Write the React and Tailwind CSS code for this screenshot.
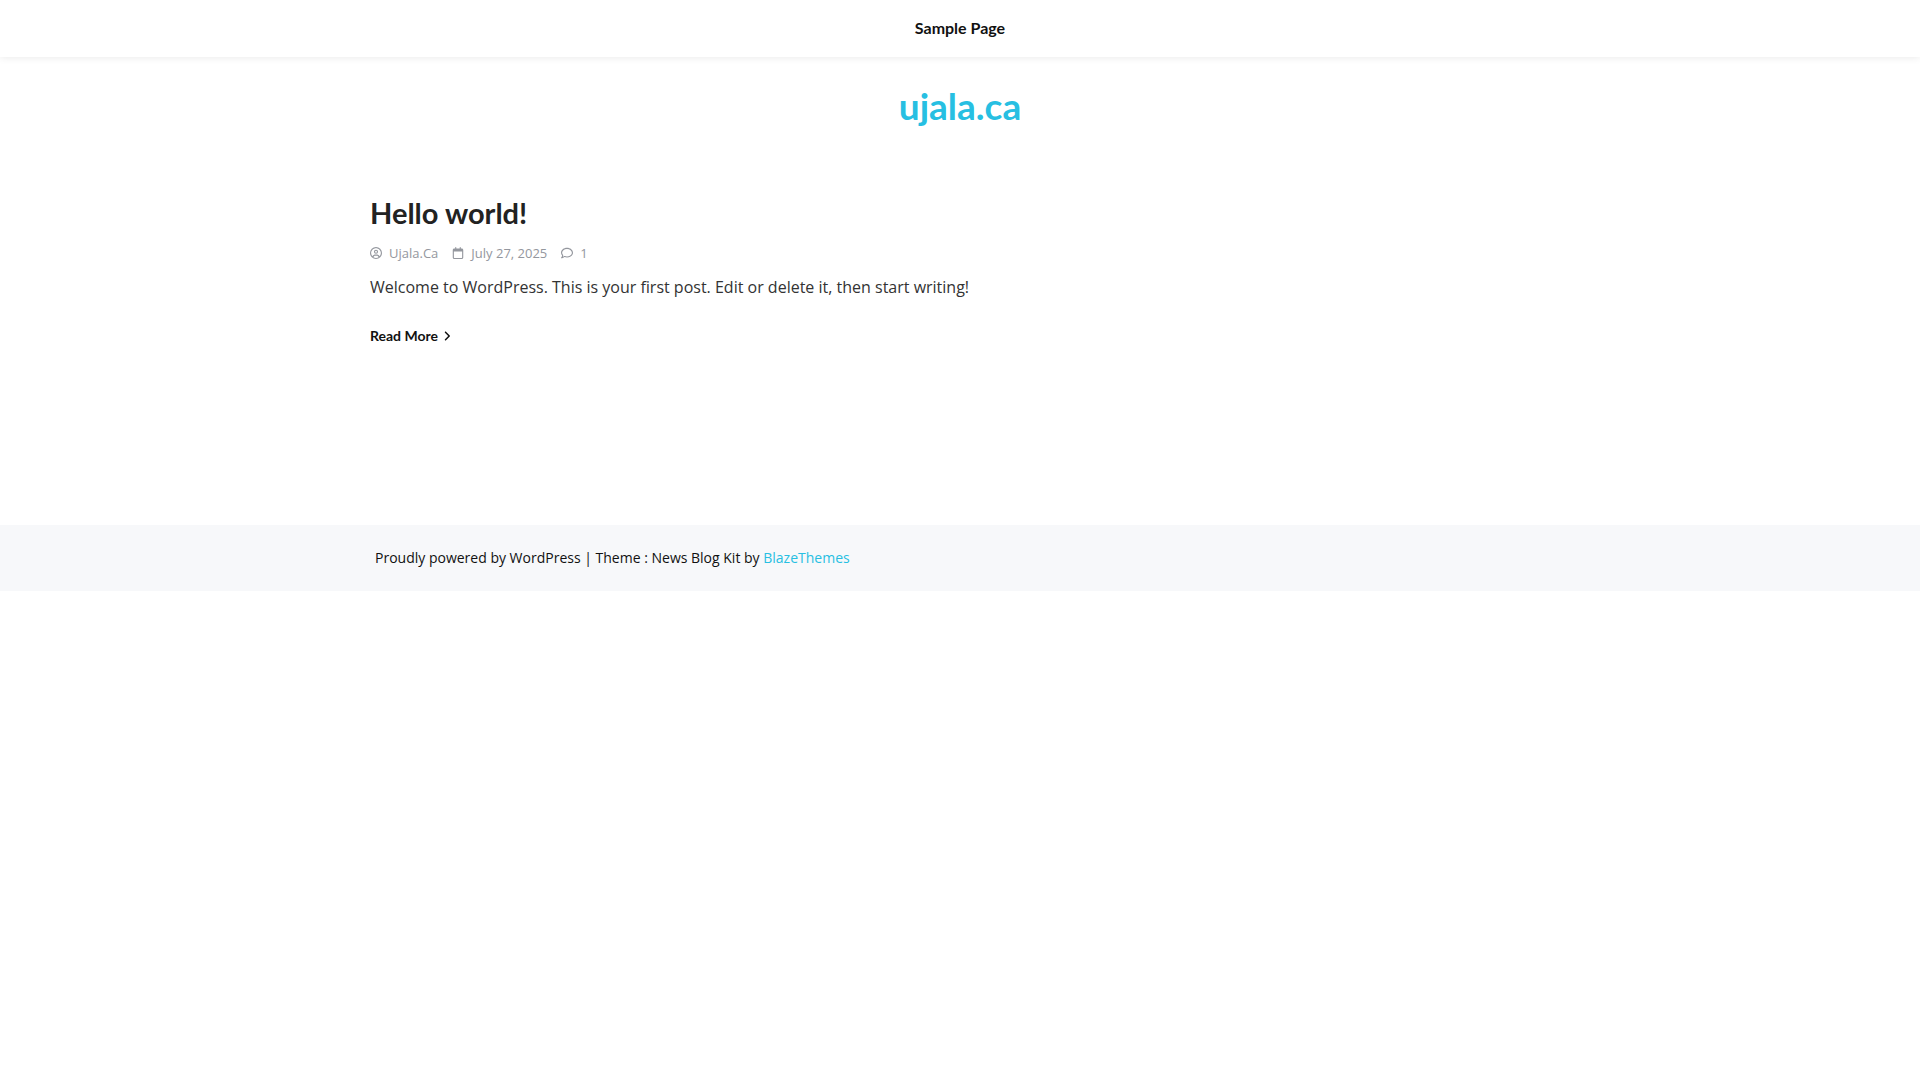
import { FaAngleRight, FaRegCalendar, FaRegCircleUser, FaRegComment } from "react-icons/fa6";

function Meta({ icon: Icon, children }) {
  return (
    <a href="#" className="flex items-center gap-[7px]">
      <Icon className="size-3" aria-hidden="true" />
      <span>{children}</span>
    </a>
  );
}

export default function App() {
  return (
    <div className="bg-white font-['Open_Sans',sans-serif] text-[#333333]">
      <nav className="flex justify-center bg-white pt-4 pb-[17px] font-['Lato',sans-serif] shadow-[0_0_8px_rgba(0,0,0,0.1)]">
        <a href="#" className="text-base leading-6 font-bold text-[#111111]">Sample Page</a>
      </nav>
      <header className="flex justify-center py-6 font-['Lato',sans-serif]">
        <a href="#" className="text-[37px] leading-[50px] font-bold text-[#27bfe2]">ujala.ca</a>
      </header>
      <main className="mx-auto max-w-[1180px] pt-10 pb-[178px]">
        <article>
          <h2 className="font-['Lato',sans-serif] text-[29px] leading-9 font-bold text-[#222222]">
            <a href="#">Hello world!</a>
          </h2>
          <div className="mt-3 flex gap-3.5 text-[13px] leading-5 text-[#94979e]">
            <Meta icon={FaRegCircleUser}>Ujala.Ca</Meta>
            <Meta icon={FaRegCalendar}>July 27, 2025</Meta>
            <Meta icon={FaRegComment}>1</Meta>
          </div>
          <p className="mt-3 text-base leading-6">
            Welcome to WordPress. This is your first post. Edit or delete it, then start writing!
          </p>
          <a href="#" className="mt-[27px] inline-flex items-center gap-[3px] font-['Lato',sans-serif] text-sm leading-5 font-bold text-[#111111]">
            Read More
            <FaAngleRight className="size-3" aria-hidden="true" />
          </a>
        </article>
      </main>
      <footer className="bg-[#f7f8fa] py-[22px]">
        <p className="mx-auto max-w-[1180px] px-[5px] text-sm leading-[22px] text-[#111111]">
          Proudly powered by WordPress | Theme : News Blog Kit by{" "}
          <a href="#" className="text-[#27bfe2]">BlazeThemes</a>
        </p>
      </footer>
    </div>
  );
}
